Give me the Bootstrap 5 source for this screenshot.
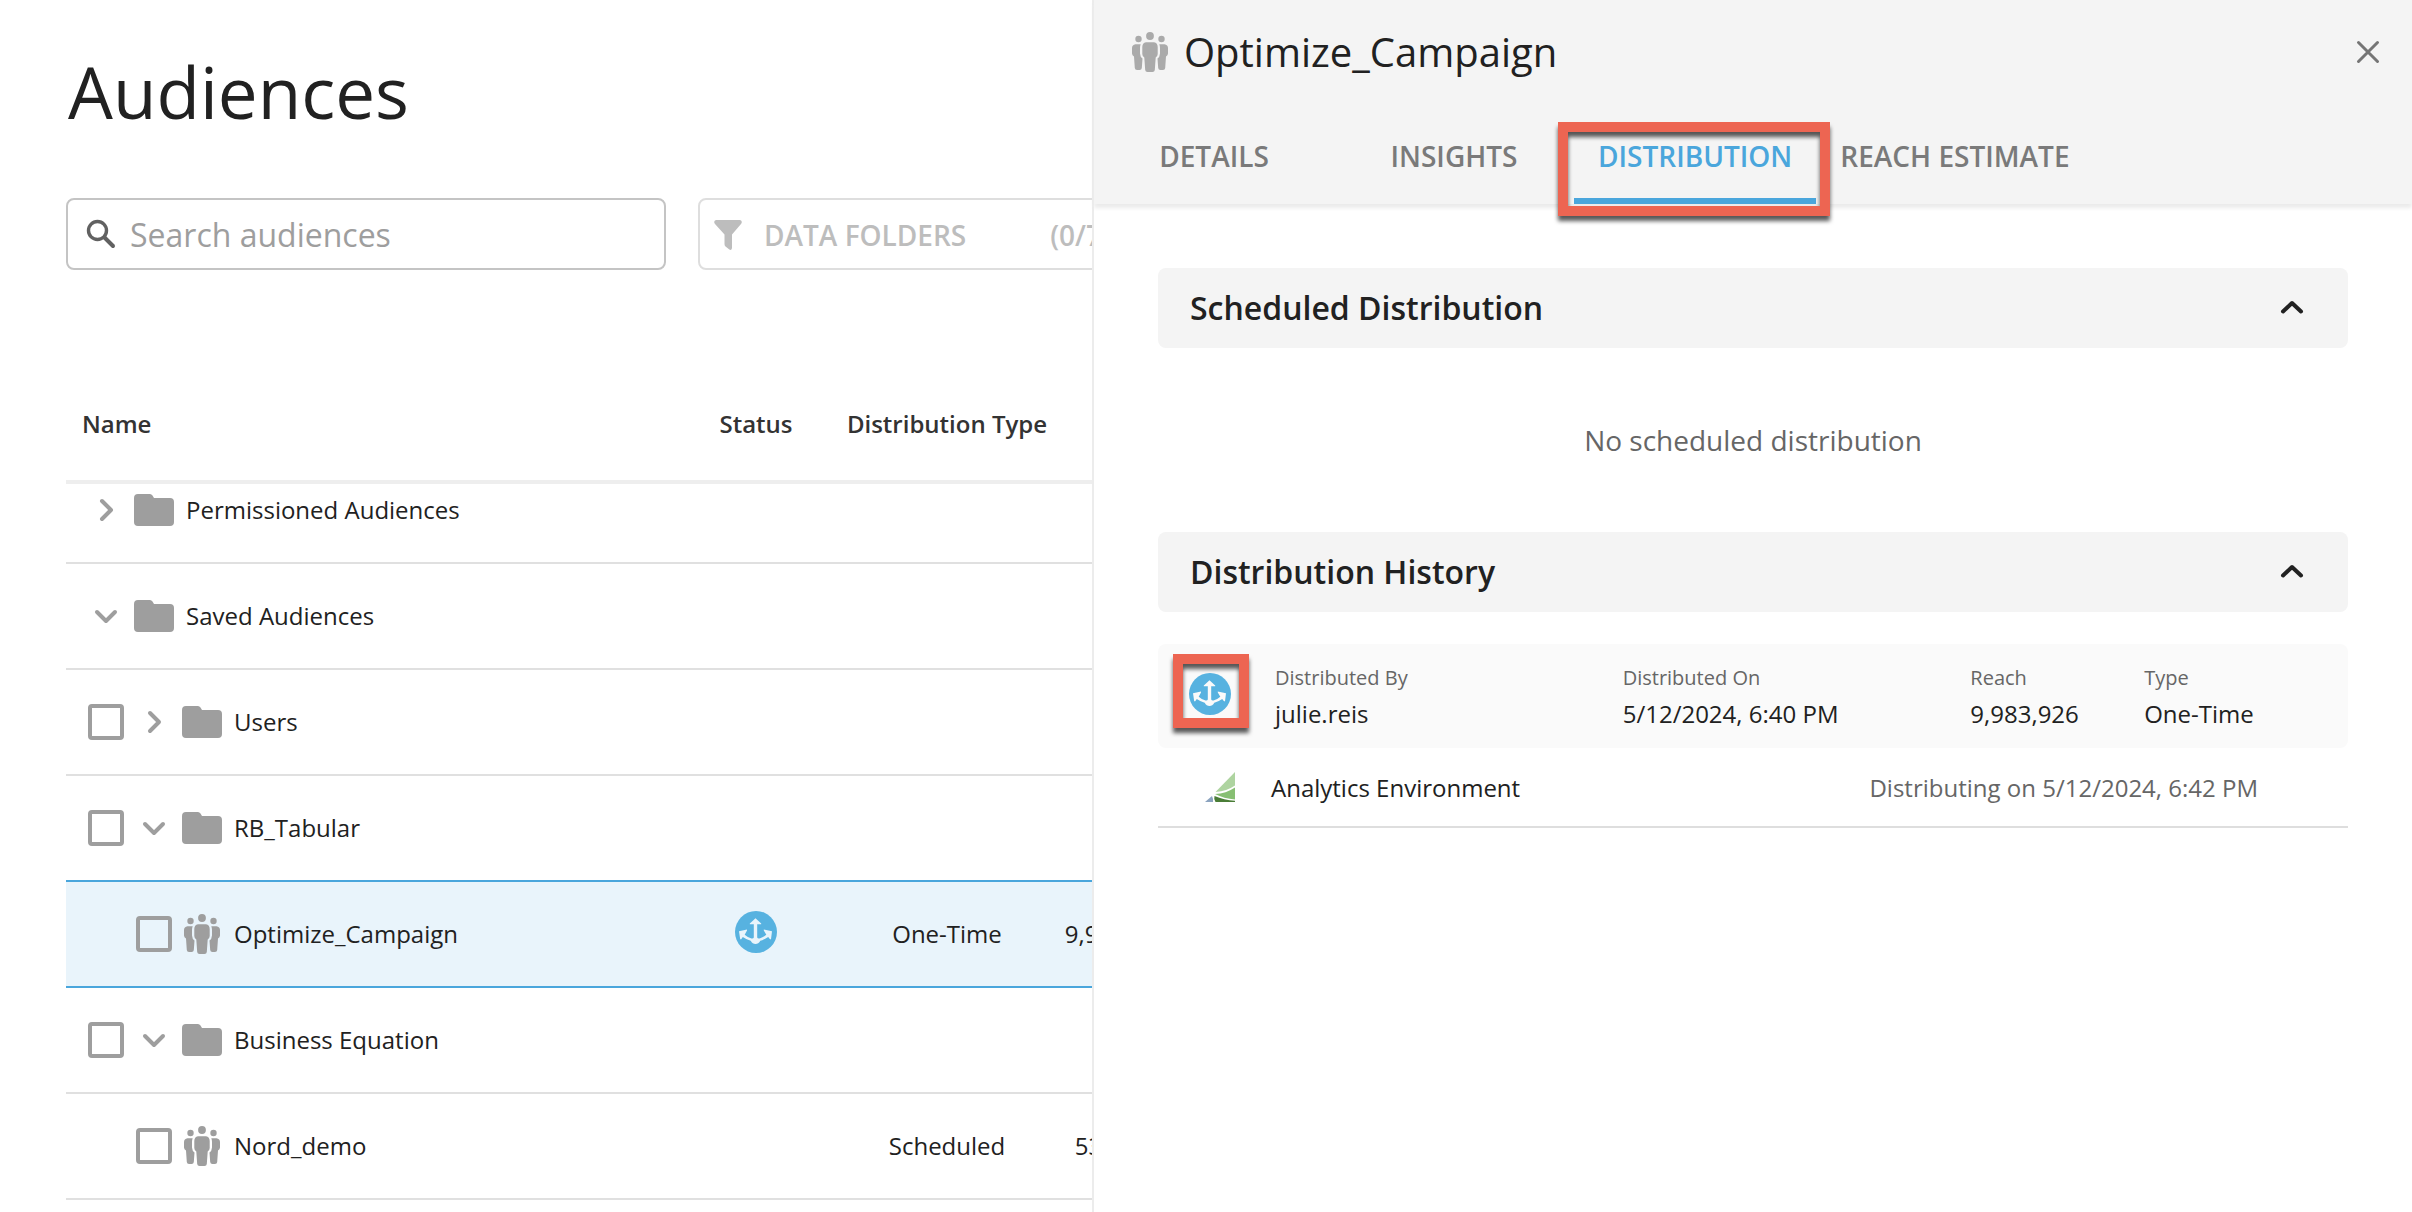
<!DOCTYPE html>
<html lang="en">
<head>
<meta charset="utf-8">
<meta name="viewport" content="width=device-width, initial-scale=1">
<title>Audiences</title>
<link href="https://cdn.jsdelivr.net/npm/bootstrap@5.3.0/dist/css/bootstrap.min.css" rel="stylesheet">
<style>
  body { font-family: "Open Sans", "Noto Sans", sans-serif; font-size: 24px; line-height: 32px; color: #212121; background: #fff; }
  svg { display: block; flex: none; }

  .app-shell { display: grid; grid-template-columns: 91fr 110fr; height: 100vh; overflow: hidden; }
  .audience-pane { min-width: 0; overflow: hidden; padding: 44px 0 0 66px; }
  .page-title { font-size: 71px; line-height: 96px; font-weight: 400; margin: 0 0 58px; padding-left: 2px; }

  .toolbar { gap: 32px; margin-bottom: 98px; }
  .search-field { flex: 0 0 600px; height: 72px; gap: 14px; padding: 0 18px; border: 2px solid #c4c4c4; border-radius: 8px; }
  .search-field input { border: 0; outline: 0; padding: 2px 0 0; font-size: 32px; line-height: 44px; background: none; color: #212121; }
  .search-field input::placeholder { color: #9e9e9e; opacity: 1; }
  .folder-filter { flex: none; height: 72px; padding: 2px 14px 0; border: 2px solid #dedede; border-radius: 8px; background: #fff; color: #bdbdbd; font-size: 28px; font-weight: 600; gap: 22px; }
  .folder-count { margin-left: 62px; }

  .audience-table { table-layout: fixed; width: 1115px; border-collapse: separate; border-spacing: 0; }
  .audience-table th { height: 116px; padding: 0; border-bottom: 4px solid #eee; font-weight: 600; color: #333; text-align: center; white-space: nowrap; }
  .audience-table th:first-child { padding-left: 16px; text-align: left; }
  .audience-table td { height: 106px; padding: 0; border-bottom: 2px solid #e0e0e0; text-align: center; vertical-align: middle; }
  .audience-table .scrolled-row td { height: 80px; padding-bottom: 26px; }
  .audience-table .selected-row td { background: #e9f4fb; border-bottom-color: #4aa6dc; box-shadow: 0 -2px 0 #4aa6dc; }
  .col-status { width: 162px; }
  .col-kind { width: 220px; }
  .col-reach { width: 124px; }
  .name-cell { gap: 12px; padding-left: 22px; color: #9e9e9e; }
  .name-cell.nested { padding-left: 70px; }
  .name-cell label, .name-cell .node-name { margin-left: 2px; color: #212121; white-space: nowrap; }
  .slot { flex: 0 0 36px; min-width: 0; height: 40px; padding: 0; border: 0; background: none; color: inherit; display: flex; align-items: center; justify-content: center; }
  .pick { appearance: none; flex: none; width: 36px; height: 36px; margin: 0; border: 4px solid #9e9e9e; border-radius: 4px; background: #fff; }
  .selected-row .pick { background: none; }
  .status-icon { color: #e9f4fb; margin: 0 auto 4px; }

  .detail-pane { min-width: 0; border-left: 2px solid #ececec; background: #fff; }
  .detail-head { background: #f4f4f4; box-shadow: 0 4px 4px #ebebeb; }
  .detail-title-row { height: 108px; padding: 0 24px 4px 38px; gap: 16px; color: #aaa; }
  .detail-title { font-size: 40px; line-height: 54px; font-weight: 400; margin: 0; color: #212121; }
  .close-btn { width: 40px; height: 40px; padding: 0; border: 0; background: none; color: #757575; }
  .pane-tab { position: relative; min-width: 240px; height: 96px; padding: 0 24px; border: 0; background: none; font-size: 28px; font-weight: 600; color: #7a7a7a; white-space: nowrap; }
  .pane-tab.current { color: #4aa6dc; box-shadow: inset 0 -6px 0 #4aa6dc; }
  .callout-box { position: absolute; border: 10px solid #ed6552; filter: drop-shadow(0 5px 2px rgba(0, 0, 0, .65)); pointer-events: none; }
  .pane-tab .callout-box { inset: 14px -14px -12px -16px; }

  .detail-body { padding: 64px; }
  .section-bar { height: 80px; padding: 0 32px; border: 0; border-radius: 8px; background: #f4f4f4; color: #212121; font-size: 32px; line-height: 44px; font-weight: 600; }
  .section-bar svg { margin-right: 12px; }
  .empty-note { height: 184px; font-size: 28px; color: #666; }
  .history-row { height: 104px; margin-top: 32px; padding-right: 30px; border-radius: 8px; background: #fafafa; }
  .history-icon { position: relative; flex: 0 0 104px; height: 100px; color: #fafafa; }
  .history-icon .callout-box { inset: 10px 13px 16px 15px; }
  .history-facts { margin: 0; padding: 16px 0 0 13px; }
  .history-facts dt { font-size: 20px; line-height: 36px; font-weight: 400; color: #666; }
  .history-facts dd { margin: 0; line-height: 36px; }
  .target-row { height: 80px; padding: 0 90px 0 47px; border-bottom: 2px solid #dedede; }
  .target-row svg { margin-right: 36px; }
  .target-row span { padding-top: 2px; }
  .target-when { color: #666; }
</style>
</head>
<body>
<svg width="0" height="0" class="position-absolute" aria-hidden="true">
  <symbol id="folder" viewBox="0 0 40 32"><path fill="currentColor" d="M4 0H16Q17.500 0 18.500 1.500L20 4H36Q40 4 40 8V28Q40 32 36 32H4Q0 32 0 28V4Q0 0 4 0Z"/></symbol>
  <symbol id="people" viewBox="0 0 36 40"><g fill="currentColor">
    <circle cx="18" cy="4" r="3.900"/><circle cx="6.500" cy="7" r="3.200"/><circle cx="29.500" cy="7" r="3.200"/>
    <path d="M14 10.200H22Q25.700 10.800 25.700 15V22Q25.600 24.500 23.700 25.500L22.800 38Q22.600 40 20.500 40H15.500Q13.400 40 13.200 38L12.300 25.500Q10.400 24.500 10.300 22V15Q10.300 10.800 14 10.200Z"/>
    <path d="M3.500 12.300H8.700Q8 14 8 16V21.500Q8.200 25 10.500 26.500L9.800 36Q9.600 38 7.600 38H5Q3 38 2.800 36L2 24.500Q.1 23.500 0 21.500V16Q.1 12.700 3.500 12.300Z"/>
    <path d="M32.500 12.300H27.300Q28 14 28 16V21.500Q27.800 25 25.500 26.500L26.200 36Q26.400 38 28.400 38H31Q33 38 33.200 36L34 24.500Q35.900 23.500 36 21.500V16Q35.900 12.700 32.500 12.300Z"/></g></symbol>
  <symbol id="anchor" viewBox="0 0 42 42"><circle cx="21" cy="21" r="21" fill="#57b2e0"/>
    <g fill="currentColor"><path d="M20.500 7.300L26.200 12.400V13.300H22.200V26.500Q22.800 27.800 24.500 27.400Q28.500 26.500 31.300 23.800L28.800 19.600V18.500L37 20.300L36 28.200H35L33.200 26Q29.500 28.600 25.300 29.800Q23.500 33 20.500 33Q17.500 33 15.700 29.800Q11.500 28.600 7.800 26L6.200 28.200H5.200L4 20.300L12 18.500V19.600L9.700 23.800Q12.500 26.500 16.500 27.400Q18.300 27.800 18.800 26.500V13.300H14.800V12.400Z"/></g></symbol>
  <symbol id="chev-right" viewBox="0 0 24 24"><path d="M8 3L17 12L8 21" fill="none" stroke="currentColor" stroke-width="4" stroke-linecap="round" stroke-linejoin="round"/></symbol>
  <symbol id="chev-down" viewBox="0 0 24 24"><path d="M3 8L12 17L21 8" fill="none" stroke="currentColor" stroke-width="4" stroke-linecap="round" stroke-linejoin="round"/></symbol>
  <symbol id="chev-up" viewBox="0 0 24 24"><path d="M3 15.500L12 7L21 15.500" fill="none" stroke="currentColor" stroke-width="4" stroke-linecap="round" stroke-linejoin="round"/></symbol>
</svg>

<div class="app-shell">
  <main class="audience-pane">
    <h1 class="page-title">Audiences</h1>

    <div class="toolbar d-flex">
      <div class="search-field d-flex align-items-center">
        <svg width="30" height="30" viewBox="0 0 30 30" fill="none" stroke="#616161"><circle cx="11.500" cy="11.500" r="9" stroke-width="3.400"/><path d="M18.500 18.500L27 27" stroke-width="4" stroke-linecap="round"/></svg>
        <input class="flex-fill" type="text" aria-label="Search audiences" placeholder="Search audiences">
      </div>
      <button type="button" class="folder-filter d-flex align-items-center">
        <svg width="28" height="30" viewBox="0 0 28 30"><path fill="currentColor" d="M2 0H26Q29 1 27 4L18 14.500V28Q17.500 31 15 29.300L11.500 26.500Q10.500 25.800 10.500 24V14.500L1 4Q-1 1 2 0Z"/></svg>
        <span>DATA FOLDERS</span>
        <span class="folder-count">(0/7)</span>
      </button>
    </div>

    <table class="audience-table">
      <colgroup><col><col class="col-status"><col class="col-kind"><col class="col-reach"></colgroup>
      <thead>
        <tr><th scope="col">Name</th><th scope="col">Status</th><th scope="col">Distribution Type</th><th></th></tr>
      </thead>
      <tbody>
        <tr class="scrolled-row">
          <td><div class="name-cell d-flex align-items-center">
            <button type="button" class="slot" aria-label="Expand Permissioned Audiences"><svg width="24" height="24"><use href="#chev-right"/></svg></button>
            <span class="slot"><svg width="40" height="32"><use href="#folder"/></svg></span>
            <span class="node-name">Permissioned Audiences</span></div></td>
          <td></td><td></td><td></td>
        </tr>
        <tr>
          <td><div class="name-cell d-flex align-items-center">
            <button type="button" class="slot" aria-label="Collapse Saved Audiences"><svg width="24" height="24"><use href="#chev-down"/></svg></button>
            <span class="slot"><svg width="40" height="32"><use href="#folder"/></svg></span>
            <span class="node-name">Saved Audiences</span></div></td>
          <td></td><td></td><td></td>
        </tr>
        <tr>
          <td><div class="name-cell d-flex align-items-center">
            <input class="pick" type="checkbox" id="pick-users">
            <button type="button" class="slot" aria-label="Expand Users"><svg width="24" height="24"><use href="#chev-right"/></svg></button>
            <span class="slot"><svg width="40" height="32"><use href="#folder"/></svg></span>
            <label for="pick-users">Users</label></div></td>
          <td></td><td></td><td></td>
        </tr>
        <tr>
          <td><div class="name-cell d-flex align-items-center">
            <input class="pick" type="checkbox" id="pick-tabular">
            <button type="button" class="slot" aria-label="Collapse RB_Tabular"><svg width="24" height="24"><use href="#chev-down"/></svg></button>
            <span class="slot"><svg width="40" height="32"><use href="#folder"/></svg></span>
            <label for="pick-tabular">RB_Tabular</label></div></td>
          <td></td><td></td><td></td>
        </tr>
        <tr class="selected-row">
          <td><div class="name-cell nested d-flex align-items-center">
            <input class="pick" type="checkbox" id="pick-optimize">
            <span class="slot"><svg width="36" height="40"><use href="#people"/></svg></span>
            <label for="pick-optimize">Optimize_Campaign</label></div></td>
          <td><svg class="status-icon" width="42" height="42"><use href="#anchor"/></svg></td>
          <td>One-Time</td><td>9,983,926</td>
        </tr>
        <tr>
          <td><div class="name-cell d-flex align-items-center">
            <input class="pick" type="checkbox" id="pick-equation">
            <button type="button" class="slot" aria-label="Collapse Business Equation"><svg width="24" height="24"><use href="#chev-down"/></svg></button>
            <span class="slot"><svg width="40" height="32"><use href="#folder"/></svg></span>
            <label for="pick-equation">Business Equation</label></div></td>
          <td></td><td></td><td></td>
        </tr>
        <tr>
          <td><div class="name-cell nested d-flex align-items-center">
            <input class="pick" type="checkbox" id="pick-nord">
            <span class="slot"><svg width="36" height="40"><use href="#people"/></svg></span>
            <label for="pick-nord">Nord_demo</label></div></td>
          <td></td><td>Scheduled</td><td>530,000</td>
        </tr>
      </tbody>
    </table>
  </main>

  <aside class="detail-pane">
    <header class="detail-head">
      <div class="detail-title-row d-flex align-items-center">
        <svg width="36" height="40"><use href="#people"/></svg>
        <h2 class="detail-title">Optimize_Campaign</h2>
        <button type="button" class="close-btn ms-auto d-flex align-items-center justify-content-center" aria-label="Close">
          <svg width="24" height="24" viewBox="0 0 24 24"><path d="M2.500 2.500L21.500 21.500M21.500 2.500L2.500 21.500" stroke="currentColor" stroke-width="3" stroke-linecap="round"/></svg>
        </button>
      </div>
      <div class="d-flex" role="tablist">
        <button type="button" role="tab" class="pane-tab">DETAILS</button>
        <button type="button" role="tab" class="pane-tab">INSIGHTS</button>
        <button type="button" role="tab" class="pane-tab current" aria-selected="true">DISTRIBUTION<span class="callout-box"></span></button>
        <button type="button" role="tab" class="pane-tab">REACH ESTIMATE</button>
      </div>
    </header>

    <div class="detail-body">
      <button type="button" class="section-bar w-100 d-flex align-items-center justify-content-between" aria-expanded="true">
        Scheduled Distribution
        <svg width="24" height="24"><use href="#chev-up"/></svg>
      </button>
      <div class="empty-note d-flex align-items-center justify-content-center">No scheduled distribution</div>

      <button type="button" class="section-bar w-100 d-flex align-items-center justify-content-between" aria-expanded="true">
        Distribution History
        <svg width="24" height="24"><use href="#chev-up"/></svg>
      </button>
      <div class="history-row d-flex">
        <div class="history-icon d-flex align-items-center justify-content-center">
          <svg width="42" height="42"><use href="#anchor"/></svg>
          <span class="callout-box"></span>
        </div>
        <dl class="history-facts row g-0 flex-fill">
          <div class="col-4"><dt>Distributed By</dt><dd>julie.reis</dd></div>
          <div class="col-4"><dt>Distributed On</dt><dd>5/12/2024, 6:40 PM</dd></div>
          <div class="col-2"><dt>Reach</dt><dd>9,983,926</dd></div>
          <div class="col-2"><dt>Type</dt><dd>One-Time</dd></div>
        </dl>
      </div>
      <div class="target-row d-flex align-items-center">
        <svg width="30" height="30" viewBox="0 0 30 30"><path fill="#aed4a0" d="M30 0V13.500Q22 19 10.500 20Z"/><path fill="#87bf73" d="M30 15.500V27.500Q19 26.500 10 22Q21 21.500 30 15.500Z"/><path fill="#4a7d37" d="M9.500 24Q19 28 30 28.800V30H10.500Q8.500 27 9.500 24Z"/><path fill="#8ba3bf" d="M0 30L7 24Q8.500 27 8 30Z"/></svg>
        <span>Analytics Environment</span>
        <span class="target-when ms-auto">Distributing on 5/12/2024, 6:42 PM</span>
      </div>
    </div>
  </aside>
</div>
<script src="https://cdn.jsdelivr.net/npm/bootstrap@5.3.0/dist/js/bootstrap.bundle.min.js"></script>
</body>
</html>
